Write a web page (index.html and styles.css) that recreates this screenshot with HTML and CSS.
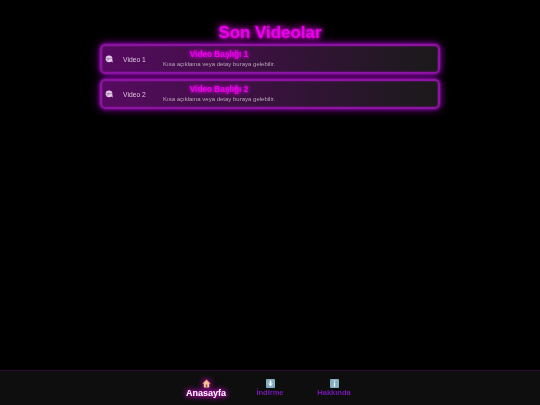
FILE: index.html
```html
<!DOCTYPE html>
<html lang="tr">
<head>
<meta charset="utf-8">
<title>Son Videolar</title>
<link rel="stylesheet" href="styles.css">
</head>
<body>
<main class="page">
  <h1 class="heading">Son Videolar</h1>
  <section class="list">
    <article class="card">
      <svg class="thumb" viewBox="0 0 8 8"><circle cx="4" cy="3.8" r="3.4" fill="#e4c8e8"/><path d="M1.2 3.4h5.6M1.5 5.4l3-1.2" stroke="#9a6aa0" stroke-width=".7"/><path d="M5.2 5.6l2.4 1.8v-2.2z" fill="#d8d8d8"/></svg>
      <span class="label">Video 1</span>
      <div class="body">
        <h3 class="title">Video Başlığı 1</h3>
        <p class="desc">Kısa açıklama veya detay buraya gelebilir.</p>
      </div>
    </article>
    <article class="card">
      <svg class="thumb" viewBox="0 0 8 8"><circle cx="4" cy="3.8" r="3.4" fill="#e4c8e8"/><path d="M1.2 3.4h5.6M1.5 5.4l3-1.2" stroke="#9a6aa0" stroke-width=".7"/><path d="M5.2 5.6l2.4 1.8v-2.2z" fill="#d8d8d8"/></svg>
      <span class="label">Video 2</span>
      <div class="body">
        <h3 class="title">Video Başlığı 2</h3>
        <p class="desc">Kısa açıklama veya detay buraya gelebilir.</p>
      </div>
    </article>
  </section>
</main>
<nav class="nav">
  <a class="nav-item active">
    <svg class="nav-icon home" viewBox="0 0 9 9"><path d="M4.5 .8L.6 4.6h1.2V8.4h5.4V4.6h1.2z" fill="#f2c4a0"/><path d="M.6 4.6L4.5 .8l3.9 3.8" fill="none" stroke="#d8604c" stroke-width=".9"/><rect x="3.7" y="5.4" width="1.6" height="3" fill="#a5663c"/></svg>
    <span>Anasayfa</span>
  </a>
  <a class="nav-item">
    <svg class="nav-icon" viewBox="0 0 9 9"><rect width="9" height="9" rx="1" fill="#84aebf"/><path d="M3.6 1.6h1.8v2.9h1.5L4.5 7.4 2.1 4.5h1.5z" fill="#f0f5f8"/></svg>
    <span>İndirme</span>
  </a>
  <a class="nav-item">
    <svg class="nav-icon" viewBox="0 0 9 9"><rect width="9" height="9" rx="1" fill="#84aebf"/><rect x="3.8" y="1.3" width="1.4" height="1.4" fill="#f0f5f8"/><rect x="3.8" y="3.5" width="1.4" height="4.2" fill="#f0f5f8"/></svg>
    <span>Hakkında</span>
  </a>
</nav>
</body>
</html>
```
FILE: styles.css
```css
* { box-sizing: border-box; }
html, body { height: 100%; }
body {
  margin: 0;
  background: #000;
  font-family: "Liberation Sans", Arial, sans-serif;
  display: flex;
  flex-direction: column;
  overflow: hidden;
}
.page { flex: 1; padding-top: 23px; }
.heading {
  margin: 0 0 2px;
  height: 19px;
  line-height: 20px;
  text-align: center;
  font-size: 16.9px;
  font-weight: 700;
  color: #e800e8;
  text-shadow: 0 0 3px #f000f0, 0 0 7px #c000c8, 0 0 11px #a000a8;
  filter: blur(.3px);
}
.list {
  width: 340px;
  margin: 0 auto;
  display: flex;
  flex-direction: column;
  gap: 5px;
}
.card {
  height: 30px;
  display: flex;
  align-items: center;
  padding-left: 3px;
  border: 2px solid #8c14a0;
  border-radius: 5px;
  background: linear-gradient(90deg, #560a60, #1a1a1a);
  box-shadow: 0 0 3px #a010c0, 0 0 8px #9000b0, inset 0 0 2px #8c14a0;
}
.thumb { width: 8px; height: 8px; flex: none; filter: blur(.3px); }
.label {
  width: 40px;
  margin-left: 10px;
  flex: none;
  font-size: 6.75px;
  color: #dcc4dc;
  filter: blur(.2px);
}
.body {
  display: flex;
  flex-direction: column;
  align-items: center;
}
.title {
  margin: 0;
  font-size: 8.25px;
  line-height: 10px;
  font-weight: 700;
  color: #e800e8;
  text-shadow: 0 0 3px #f000f0, 0 0 5px #c000c8;
  filter: blur(.3px);
}
.desc {
  margin: 0;
  font-size: 6px;
  line-height: 8px;
  color: #b8a4b8;
  filter: blur(.2px);
}
.nav {
  height: 35px;
  flex: none;
  display: flex;
  justify-content: center;
  background: #0e0e0e;
  border-top: 1px solid #2e0a34;
  padding-top: 8px;
}
.nav-item {
  width: 64px;
  display: flex;
  flex-direction: column;
  align-items: center;
  font-size: 7.5px;
  line-height: 9px;
  font-weight: 700;
  color: #7418b0;
  filter: blur(.25px);
}
.nav-icon { width: 9px; height: 9px; }
.active {
  font-size: 9px;
  line-height: 11px;
  color: #fff;
  text-shadow: 0 0 4px #ff00ff, 0 0 7px #ff00ff;
}
.home { filter: drop-shadow(0 0 3px #ff00ff); }
```
